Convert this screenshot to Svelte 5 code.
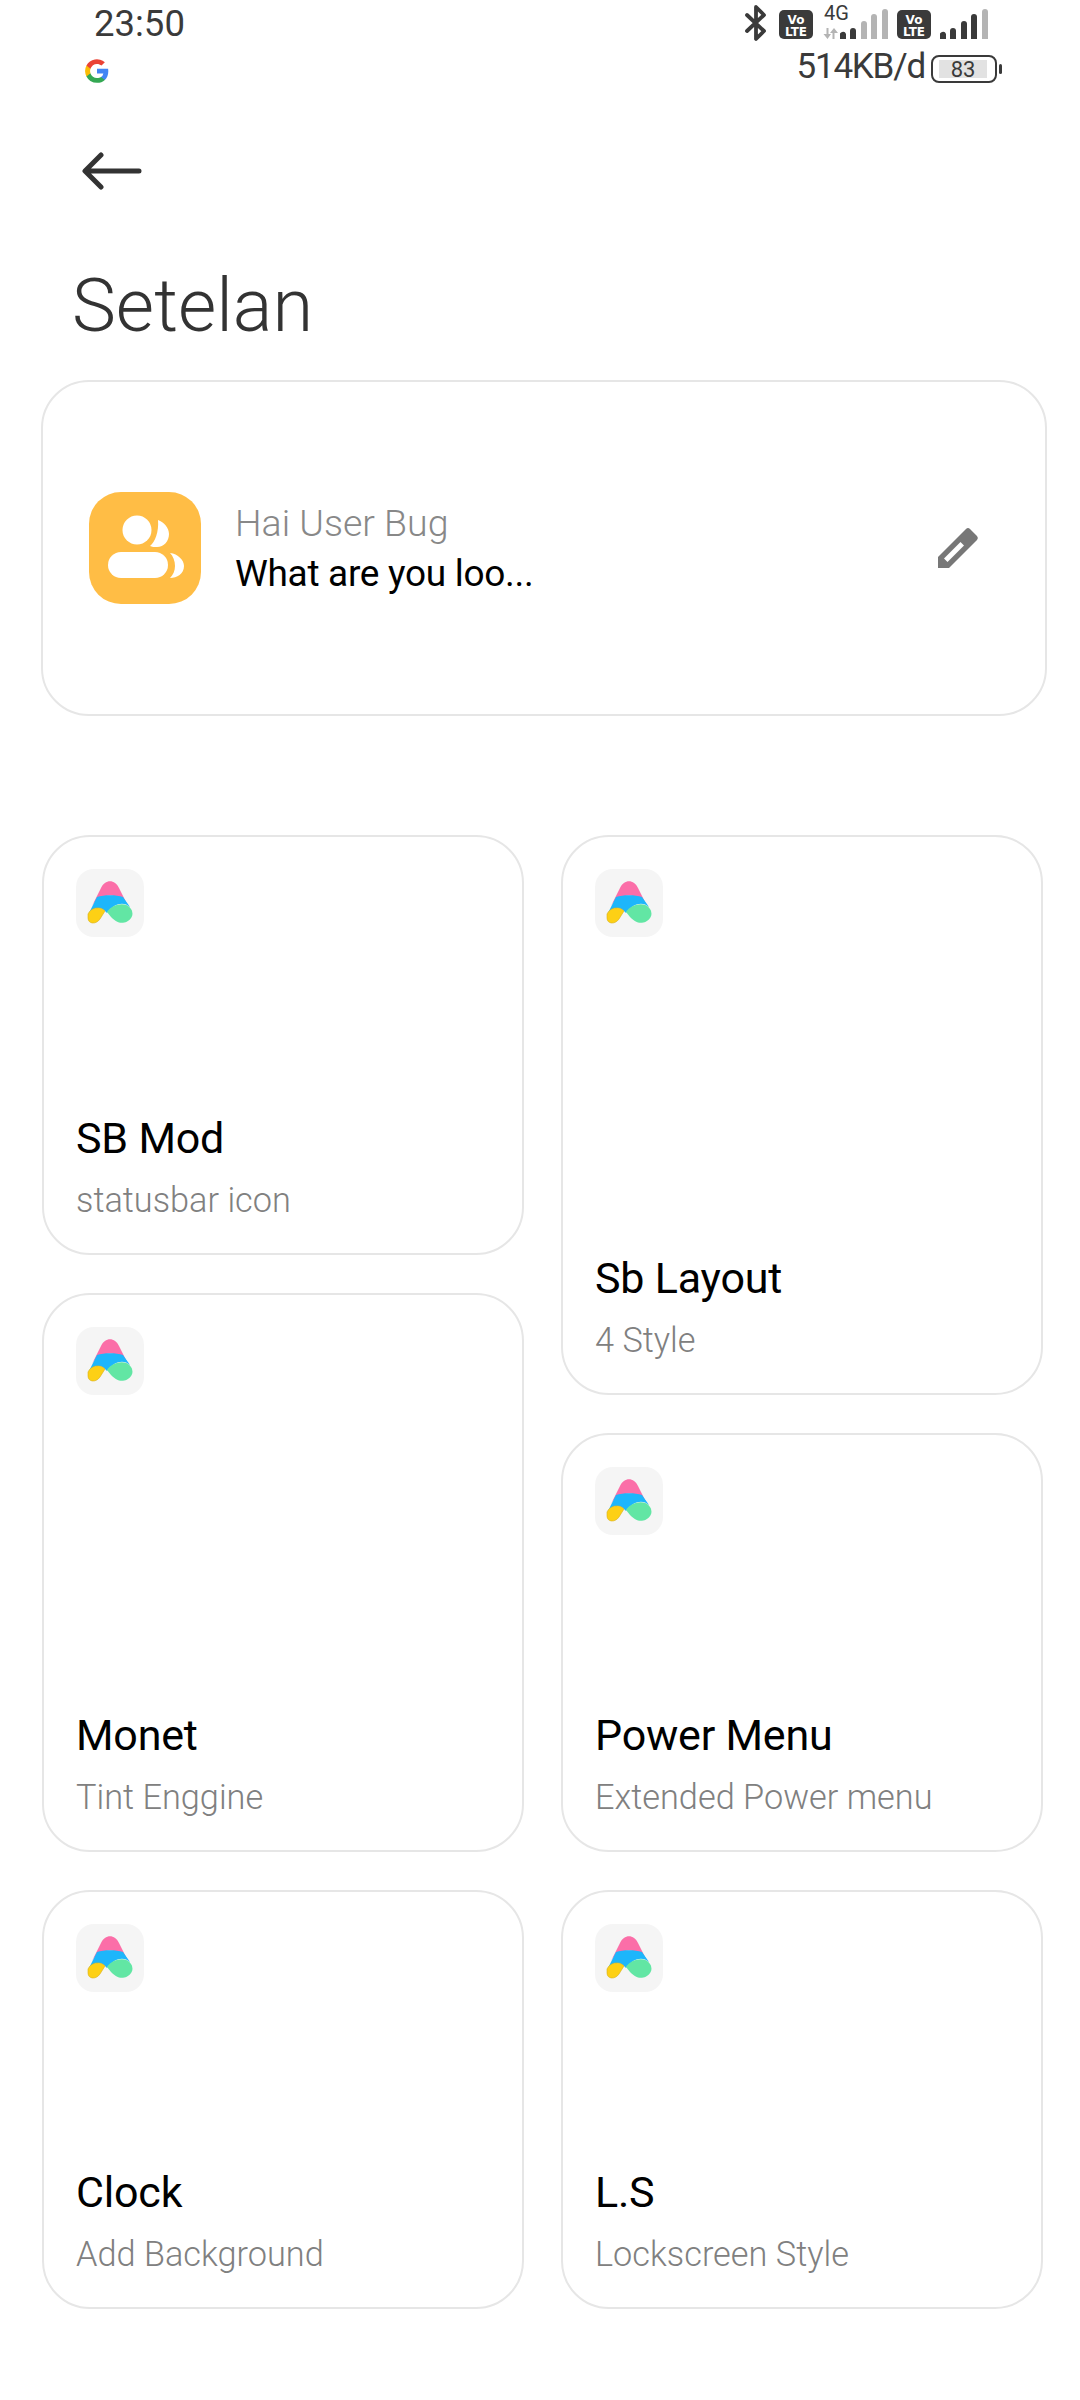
<script>
  const left = [
    { title: 'SB Mod', sub: 'statusbar icon', h: 420 },
    { title: 'Monet', sub: 'Tint Enggine', h: 559 },
    { title: 'Clock', sub: 'Add Background', h: 419 }
  ];
  const right = [
    { title: 'Sb Layout', sub: '4 Style', h: 560 },
    { title: 'Power Menu', sub: 'Extended Power menu', h: 419 },
    { title: 'L.S', sub: 'Lockscreen Style', h: 419 }
  ];
  const columns = [left, right];
</script>

{#snippet volte()}
  <svg class="volte" viewBox="0 0 34 29" width="34" height="29">
    <rect width="34" height="29" rx="5" fill="#3a3a3a" />
    <text x="17" y="13.500" text-anchor="middle" class="volte-text">Vo</text>
    <text x="17" y="26" text-anchor="middle" class="volte-text">LTE</text>
  </svg>
{/snippet}

{#snippet bars(o)}
  <svg class="bars" viewBox="0 0 48 30" width="48" height="30">
    <path d="M0 30v-3a3 3 0 0 1 6-2v5z" fill={o[0]} />
    <path d="M10 30v-8a3 3 0 0 1 6 0v8z" fill={o[1]} />
    <path d="M21 30V15a3 3 0 0 1 6 0v15z" fill={o[2]} />
    <path d="M31 30V8a3 3 0 0 1 6 0v22z" fill={o[3]} />
    <path d="M42 30V3a3 3 0 0 1 6 0v27z" fill={o[4]} />
  </svg>
{/snippet}

<main class="page">
  <header class="status">
    <div class="status-left">
      <span class="time">23:50</span>
      <svg class="google" viewBox="0 0 26 26" width="28" height="28">
        <path d="M23.5 13.2c0-.8-.1-1.6-.2-2.3H13v4.400h5.900a5 5 0 0 1-2.200 3.300v2.800h3.600c2.100-2 3.200-4.900 3.200-8.200z" fill="#4285f4" />
        <path d="M13 24c3 0 5.400-1 7.300-2.700l-3.600-2.800c-1 .7-2.200 1.100-3.700 1.100-2.800 0-5.200-1.900-6.100-4.500H3.200v2.900A11 11 0 0 0 13 24z" fill="#34a853" />
        <path d="M6.900 15.100a6.600 6.600 0 0 1 0-4.200V8H3.200a11 11 0 0 0 0 10z" fill="#fbbc05" />
        <path d="M13 6.400c1.600 0 3 .6 4.200 1.600l3.100-3.100A11 11 0 0 0 3.200 8l3.700 2.900C7.800 8.300 10.200 6.400 13 6.400z" fill="#ea4335" />
      </svg>
    </div>
    <div class="status-right">
      <div class="icons">
        <svg class="bt" viewBox="0 0 22 38" width="24" height="38">
          <path d="M2 11l17 16-8 8V3l8 8L2 27" fill="none" stroke="#3a3a3a" stroke-width="3.800" stroke-linejoin="round" stroke-linecap="round" />
        </svg>
        {@render volte()}
        <div class="sim">
          <span class="net">4G</span>
          <svg class="arrows" viewBox="0 0 17 11" width="17" height="11">
            <path d="M4.500 0h2v6h2.500L5.500 11 1.500 6h3zM10.500 11V5H8l4-5 4 5h-3.500v6z" fill="#b4b4b4" />
          </svg>
          {@render bars(['#3a3a3a', '#3a3a3a', '#b4b4b4', '#b4b4b4', '#b4b4b4'])}
        </div>
        {@render volte()}
        {@render bars(['#3a3a3a', '#3a3a3a', '#3a3a3a', '#3a3a3a', '#b4b4b4'])}
      </div>
      <div class="speed-row">
        <span class="speed">514KB/d</span>
        <div class="battery">
          <div class="battery-body"><span class="battery-fill">83</span></div>
          <span class="battery-tip"></span>
        </div>
      </div>
    </div>
  </header>

  <button class="back" aria-label="Back">
    <svg viewBox="0 0 60 40" width="60" height="40">
      <path d="M57 20H4M19 4 3 20l16 16" fill="none" stroke="#333" stroke-width="5" stroke-linecap="round" stroke-linejoin="round" />
    </svg>
  </button>

  <h1 class="heading">Setelan</h1>

  <section class="profile">
    <svg class="avatar" viewBox="0 0 112 112" width="112" height="112">
      <rect width="112" height="112" rx="32" fill="#ffbd45" />
      <circle cx="48" cy="38" r="14.500" fill="#fff" />
      <path d="M69 28c6 2 11 8 11 14 0 7-5 13-12 13-3 0-5 0-7-1 5-4 9-14 8-26z" fill="#fff" />
      <rect x="19" y="60" width="60" height="26" rx="13" fill="#fff" />
      <path d="M81 61c8 1 14 7 14 13 0 8-7 12-14 12 3-3 5-7 5-12s-2-10-5-13z" fill="#fff" />
    </svg>
    <div class="profile-text">
      <span class="hello">Hai User Bug</span>
      <span class="tagline">What are you loo...</span>
    </div>
    <svg class="pencil" viewBox="0 0 42 42" width="42" height="42">
      <path d="M1 41V30L29 2a3 3 0 0 1 4 0l7 7a3 3 0 0 1 0 4L12 41zM7 31.500l3.500 3.500L27 18.500 23.500 15z" fill="#777" fill-rule="evenodd" />
    </svg>
  </section>

  <section class="grid">
    {#each columns as col}
      <div class="col">
        {#each col as item}
          <article class="card" style="height:{item.h}px">
            <div class="tile">
              <svg viewBox="0 0 68 68" width="68" height="68">
                <path d="M25 19C29 10 39 10 43 19L52 37C44 23 24 23 16 37Z" fill="#fb6ea8" />
                <path d="M21 28C28 25.500 40 25.500 47 28L54 38C48 32 38 34 31 44L29 42C24 37 16 38 12 46Z" fill="#1db6fb" />
                <path d="M12 45C15 38 25 37 29 42L24 50C20 56 12 55 12 49Z" fill="#fdd015" stroke="#d9b01a" stroke-width=".6" />
                <path d="M31 43C36 35 50 32 55 40C60 48 51 55.500 43 53.500C38 52 34 47 31 43Z" fill="#62e6a4" />
              </svg>
            </div>
            <h2 class="title">{item.title}</h2>
            <p class="sub">{item.sub}</p>
          </article>
        {/each}
      </div>
    {/each}
  </section>
</main>

<style>
  :global(body) {
    margin: 0;
    background: #fff;
  }
  .page {
    position: relative;
    width: 1080px;
    height: 2400px;
    background: #fff;
    font-family: Roboto, Inter, 'Liberation Sans', sans-serif;
    overflow: hidden;
  }
  .status {
    display: flex;
    justify-content: space-between;
    height: 100px;
    padding: 0 92px 0 83px;
    box-sizing: border-box;
  }
  .status-left {
    display: flex;
    flex-direction: column;
    align-items: flex-start;
  }
  .time {
    margin: 1px 0 0 11px;
    font-size: 36.500px;
    line-height: 46px;
    color: #3a3a3a;
  }
  .google {
    margin-top: 10px;
  }
  .status-right {
    display: flex;
    flex-direction: column;
    align-items: flex-end;
  }
  .icons {
    display: flex;
    align-items: flex-end;
    height: 42px;
    gap: 9px;
  }
  .bt {
    margin-right: 2px;
  }
  .volte {
    margin-bottom: 3px;
  }
  .volte-text {
    font-family: 'DejaVu Sans', sans-serif;
    font-size: 12px;
    font-weight: 700;
    fill: #fff;
  }
  .sim {
    position: relative;
    display: flex;
    align-items: flex-end;
    gap: 1px;
  }
  .net {
    position: absolute;
    left: 2px;
    top: -6px;
    font-size: 20px;
    line-height: 20px;
    color: #3a3a3a;
  }
  .arrows {
    margin-bottom: 3px;
  }
  .bars {
    margin-bottom: 3px;
  }
  .speed-row {
    display: flex;
    align-items: center;
    margin-top: 4px;
    gap: 6px;
    margin-right: -14px;
  }
  .speed {
    font-size: 35px;
    line-height: 42px;
    letter-spacing: -1.200px;
    color: #3a3a3a;
  }
  .battery {
    display: flex;
    align-items: center;
    gap: 2px;
    margin-top: 3px;
  }
  .battery-body {
    box-sizing: border-box;
    width: 66px;
    height: 28px;
    padding: 3px 6px;
    border: 2.500px solid #3a3a3a;
    border-radius: 8px;
    display: flex;
  }
  .battery-fill {
    flex: 1;
    background: #e2e2e2;
    font-size: 22px;
    line-height: 20px;
    text-align: center;
    color: #3a3a3a;
    margin-right: 2px;
  }
  .battery-tip {
    width: 3px;
    height: 10px;
    background: #3a3a3a;
    border-radius: 2px;
  }
  .back {
    display: block;
    margin: 51px 0 0 82px;
    padding: 0;
    border: 0;
    background: none;
    height: 40px;
  }
  .heading {
    margin: 71px 0 0 72px;
    font-size: 74px;
    line-height: 88px;
    font-weight: 300;
    color: #333;
  }
  .profile {
    box-sizing: border-box;
    display: flex;
    align-items: center;
    width: 1006px;
    height: 336px;
    margin: 30px 0 0 41px;
    padding: 0 66px 0 46px;
    border: 2px solid #e6e6e6;
    border-radius: 48px;
  }
  .profile-text {
    display: flex;
    flex-direction: column;
    margin-left: 34px;
    flex: 1;
  }
  .hello {
    font-size: 37.500px;
    line-height: 48px;
    margin-bottom: 3px;
    color: #888;
    font-weight: 300;
  }
  .tagline {
    font-size: 37px;
    line-height: 48px;
    letter-spacing: -0.300px;
    color: #000;
  }
  .grid {
    display: flex;
    gap: 37px;
    margin: 119px 0 0 42px;
  }
  .col {
    display: flex;
    flex-direction: column;
    gap: 38px;
    width: 482px;
  }
  .card {
    box-sizing: border-box;
    display: flex;
    flex-direction: column;
    padding: 32px 32px 0;
    border: 2px solid #e6e6e6;
    border-radius: 48px;
  }
  .tile {
    width: 68px;
    height: 68px;
    background: #f5f5f5;
    border-radius: 18px;
  }
  .title {
    margin: auto 0 0;
    font-size: 43px;
    line-height: 56px;
    letter-spacing: -0.200px;
    font-weight: 400;
    color: #000;
  }
  .sub {
    margin: 12px 0 31px;
    font-size: 34.300px;
    line-height: 44px;
    font-weight: 300;
    color: #808080;
  }
</style>
